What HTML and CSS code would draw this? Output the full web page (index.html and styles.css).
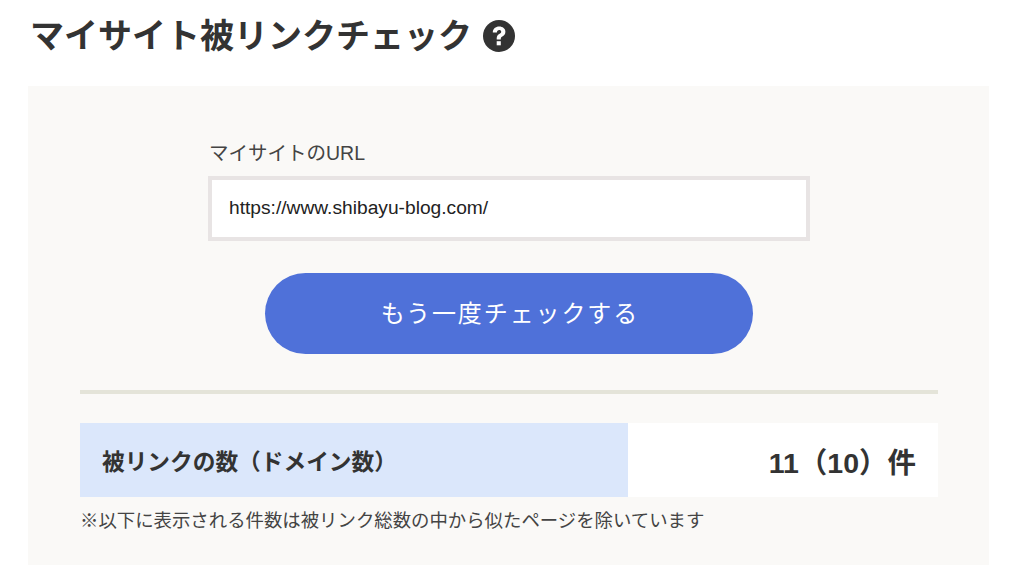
FILE: index.html
```html
<!DOCTYPE html>
<html lang="ja">
<head>
<meta charset="utf-8">
<title>マイサイト被リンクチェック</title>
<link rel="stylesheet" href="styles.css">
</head>
<body>
<div class="page">
  <h1 class="title">
    <span class="title-text">マイサイト被リンクチェック</span>
    <svg class="help" viewBox="0 0 32 32" aria-hidden="true">
      <circle cx="16" cy="16" r="16" fill="#333"/>
      <path d="M9.8 12.4c0-3.6 2.8-5.8 6.4-5.8 3.5 0 6.2 2.1 6.2 5.2 0 2.5-1.4 3.7-3.1 4.8-1.2.8-1.5 1.3-1.5 2.5v.5h-4.1v-1c0-2.2.9-3.4 2.5-4.5 1.3-.9 2-1.4 2-2.4 0-1.1-.9-1.7-2-1.7-1.4 0-2.3.9-2.3 2.4z" fill="#fff"/>
      <rect x="13.7" y="21.2" width="4.1" height="4.1" fill="#fff"/>
    </svg>
  </h1>
  <section class="panel">
    <div class="form">
      <label class="label">マイサイトのURL</label>
      <div class="input">https://www.shibayu-blog.com/</div>
    </div>
    <div class="button-row">
      <div class="button">もう一度チェックする</div>
    </div>
    <hr class="divider">
    <div class="result">
      <div class="result-label">被リンクの数（ドメイン数）</div>
      <div class="result-value">11（10）件</div>
    </div>
    <p class="note"><span class="note-mark">※</span>以下に表示される件数は被リンク総数の中から似たページを除いています</p>
  </section>
</div>
</body>
</html>
```
FILE: styles.css
```css
* { box-sizing: border-box; }
html, body { margin: 0; padding: 0; background: #fff; }
body {
  color: #333;
  font-family: "Liberation Sans", "Noto Sans CJK JP", sans-serif;
  overflow: hidden;
}
.page { width: 1024px; height: 565px; padding: 0 35px 0 28px; }
.title {
  display: flex;
  align-items: center;
  gap: 11px;
  height: 86px;
  margin: 0;
  padding: 0 0 15px 2px;
  font-size: 34px;
  font-weight: 700;
  line-height: 1;
}
.help { width: 32px; height: 32px; }
.panel {
  height: 479px;
  padding: 53px 51px 0 52px;
  background: #faf9f7;
}
.form { width: 602px; margin: 0 auto; }
.label {
  display: block;
  height: 37px;
  padding-left: 1px;
  font-size: 19.5px;
  line-height: 29px;
  color: #444;
}
.input {
  display: flex;
  align-items: center;
  height: 65px;
  padding-left: 17px;
  padding-bottom: 2px;
  background: #fff;
  border: 4px solid #e8e4e4;
  font-size: 19.2px;
  color: #222;
}
.button-row { display: flex; justify-content: center; margin-top: 32px; }
.button {
  display: flex;
  align-items: center;
  justify-content: center;
  width: 488px;
  height: 81px;
  padding: 0 0 4px 2px;
  border-radius: 41px;
  background: #4f71d9;
  color: #fff;
  font-size: 24px;
  letter-spacing: 1.9px;
}
.divider {
  height: 4px;
  margin: 36px 0 0;
  border: 0;
  background: #e4e4d9;
}
.result { display: flex; height: 74px; margin-top: 29px; background: #fff; }
.result-label {
  display: flex;
  align-items: center;
  width: 548px;
  padding-left: 22px;
  background: #dbe7fb;
  font-size: 22.7px;
  font-weight: 700;
}
.result-value {
  display: flex;
  align-items: center;
  justify-content: flex-end;
  flex: 1;
  padding-right: 22px;
  font-size: 28.5px;
  font-weight: 700;
}
.note {
  margin: 12px 0 0;
  font-size: 18.4px;
  line-height: 24px;
  color: #444;
}
.note-mark { font-weight: 700; }
```
